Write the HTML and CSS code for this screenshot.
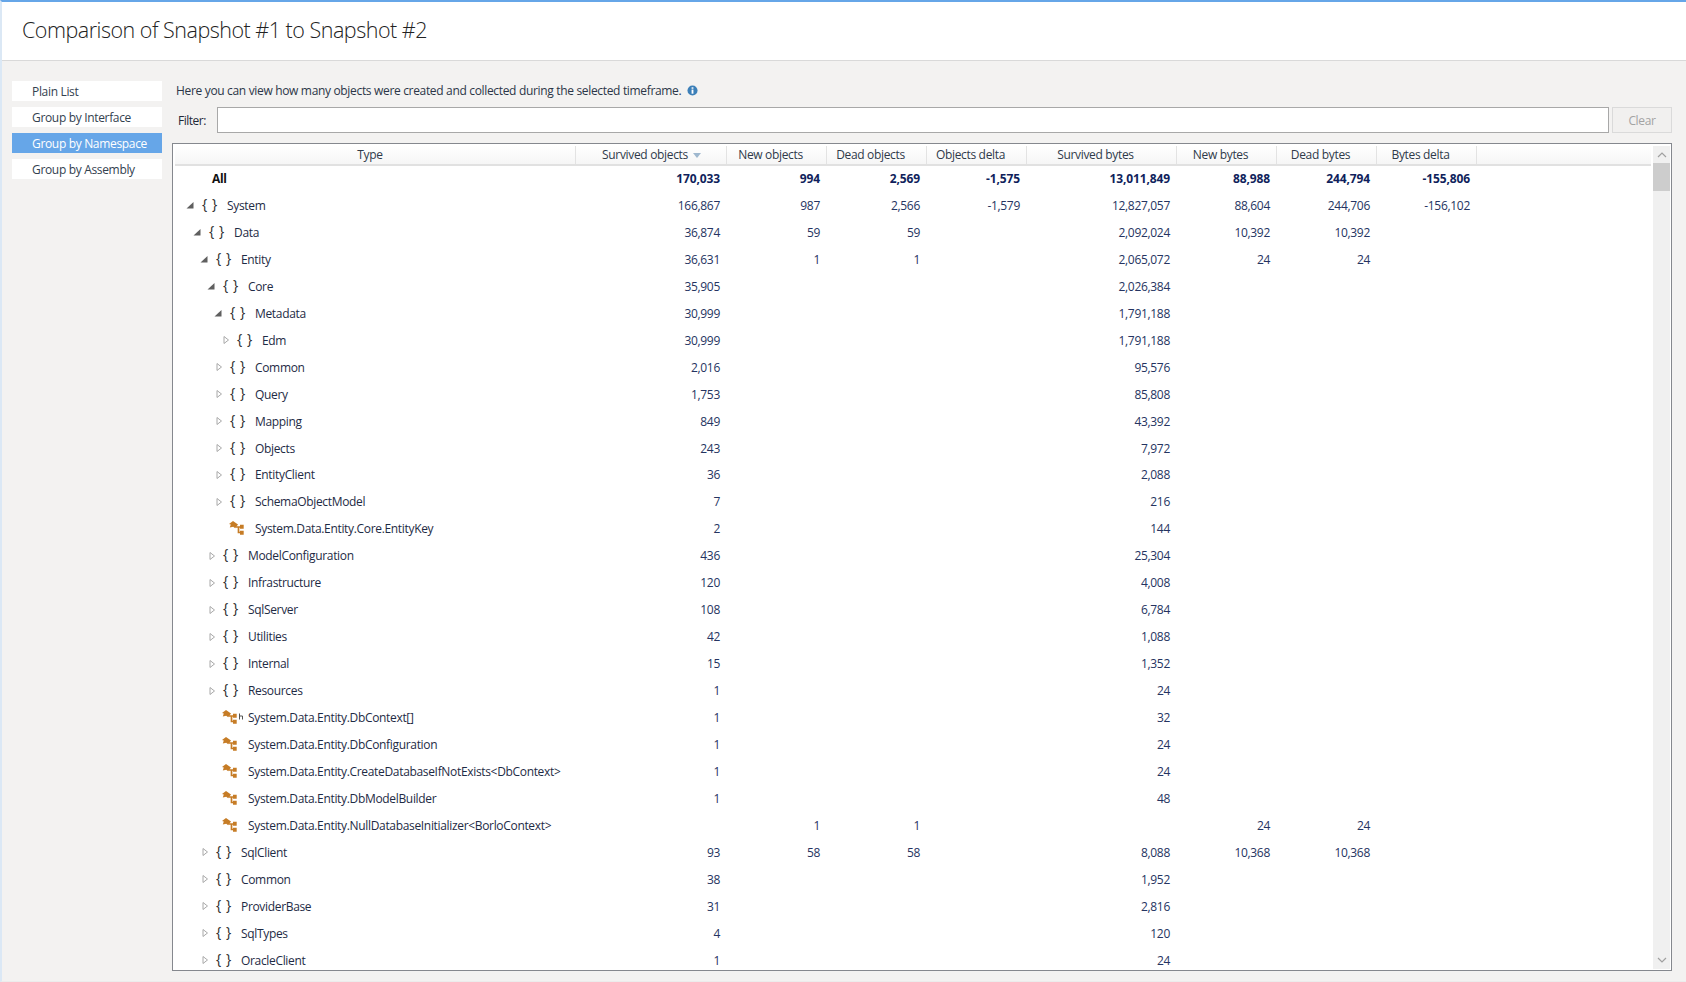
FILE: index.html
```html
<!DOCTYPE html>
<html lang="en">
<head>
<meta charset="utf-8">
<title>Comparison of Snapshot #1 to Snapshot #2</title>
<link rel="stylesheet" href="styles.css">
</head>
<body>
<svg class="defs" width="0" height="0" aria-hidden="true">
  <symbol id="exp" viewBox="0 0 8 10"><path d="M7.500 2v6.500H.5z" fill="#5f5f5f"/></symbol>
  <symbol id="col" viewBox="0 0 8 10"><path d="M3 1.500L7.500 5 3 8.500z" fill="#fff" stroke="#a8a8a8"/></symbol>
  <symbol id="cls" viewBox="0 0 15 14">
    <path d="M4 0l5 3.400L6.200 7.200 4.200 5.700 .8 6.600l1-3L0 3z" fill="#c67c26"/>
    <path d="M7 6h5M9.500 6v5.500h3" fill="none" stroke="#c67c26" stroke-width="1.700"/>
    <path d="M11 3.800h3.700v4H11zM11 9.800h3.700v4H11z" fill="#c67c26"/>
  </symbol>
</svg>
<header class="top"><h1>Comparison of Snapshot #1 to Snapshot #2</h1></header>
<main class="main">
  <nav class="side">
    <a class="item">Plain List</a>
    <a class="item">Group by Interface</a>
    <a class="item on">Group by Namespace</a>
    <a class="item">Group by Assembly</a>
  </nav>
  <section class="content">
    <p class="hint">Here you can view how many objects were created and collected during the selected timeframe.
      <svg class="info" viewBox="0 0 12 12" width="11" height="11"><circle cx="6" cy="6" r="5.500" fill="#3c7fb8"/><rect x="5" y="5" width="2" height="4.500" fill="#fff"/><rect x="5" y="2.500" width="2" height="1.600" fill="#fff"/></svg></p>
    <div class="filter">
      <label class="flabel">Filter:</label>
      <input class="finput" type="text">
      <button class="clear" type="button">Clear</button>
    </div>
    <div class="grid">
      <div class="table">
        <div class="head">
          <div class="htype">Type</div>
          <div>Survived objects<svg class="sort" viewBox="0 0 8 5" width="8" height="5"><path d="M0 0h8L4 5z" fill="#9fb8cf"/></svg></div>
          <div>New objects</div><div>Dead objects</div><div>Objects delta</div><div>Survived bytes</div><div>New bytes</div><div>Dead bytes</div><div>Bytes delta</div><div></div>
        </div>
        <div class="body">
          <div class="row total"><div class="name all">All</div><span>170,033</span><span>994</span><span>2,569</span><span>-1,575</span><span>13,011,849</span><span>88,988</span><span>244,794</span><span>-155,806</span></div>
          <div class="row"><div class="name d0"><svg class="arr"><use href="#exp"/></svg><b class="ic">{ }</b>System</div><span>166,867</span><span>987</span><span>2,566</span><span>-1,579</span><span>12,827,057</span><span>88,604</span><span>244,706</span><span>-156,102</span></div>
          <div class="row"><div class="name d1"><svg class="arr"><use href="#exp"/></svg><b class="ic">{ }</b>Data</div><span>36,874</span><span>59</span><span>59</span><span></span><span>2,092,024</span><span>10,392</span><span>10,392</span><span></span></div>
          <div class="row"><div class="name d2"><svg class="arr"><use href="#exp"/></svg><b class="ic">{ }</b>Entity</div><span>36,631</span><span>1</span><span>1</span><span></span><span>2,065,072</span><span>24</span><span>24</span><span></span></div>
          <div class="row"><div class="name d3"><svg class="arr"><use href="#exp"/></svg><b class="ic">{ }</b>Core</div><span>35,905</span><span></span><span></span><span></span><span>2,026,384</span><span></span><span></span><span></span></div>
          <div class="row"><div class="name d4"><svg class="arr"><use href="#exp"/></svg><b class="ic">{ }</b>Metadata</div><span>30,999</span><span></span><span></span><span></span><span>1,791,188</span><span></span><span></span><span></span></div>
          <div class="row"><div class="name d5"><svg class="arr"><use href="#col"/></svg><b class="ic">{ }</b>Edm</div><span>30,999</span><span></span><span></span><span></span><span>1,791,188</span><span></span><span></span><span></span></div>
          <div class="row"><div class="name d4"><svg class="arr"><use href="#col"/></svg><b class="ic">{ }</b>Common</div><span>2,016</span><span></span><span></span><span></span><span>95,576</span><span></span><span></span><span></span></div>
          <div class="row"><div class="name d4"><svg class="arr"><use href="#col"/></svg><b class="ic">{ }</b>Query</div><span>1,753</span><span></span><span></span><span></span><span>85,808</span><span></span><span></span><span></span></div>
          <div class="row"><div class="name d4"><svg class="arr"><use href="#col"/></svg><b class="ic">{ }</b>Mapping</div><span>849</span><span></span><span></span><span></span><span>43,392</span><span></span><span></span><span></span></div>
          <div class="row"><div class="name d4"><svg class="arr"><use href="#col"/></svg><b class="ic">{ }</b>Objects</div><span>243</span><span></span><span></span><span></span><span>7,972</span><span></span><span></span><span></span></div>
          <div class="row"><div class="name d4"><svg class="arr"><use href="#col"/></svg><b class="ic">{ }</b>EntityClient</div><span>36</span><span></span><span></span><span></span><span>2,088</span><span></span><span></span><span></span></div>
          <div class="row"><div class="name d4"><svg class="arr"><use href="#col"/></svg><b class="ic">{ }</b>SchemaObjectModel</div><span>7</span><span></span><span></span><span></span><span>216</span><span></span><span></span><span></span></div>
          <div class="row"><div class="name d4"><i class="arr"></i><svg class="ic cl"><use href="#cls"/></svg>System.Data.Entity.Core.EntityKey</div><span>2</span><span></span><span></span><span></span><span>144</span><span></span><span></span><span></span></div>
          <div class="row"><div class="name d3"><svg class="arr"><use href="#col"/></svg><b class="ic">{ }</b>ModelConfiguration</div><span>436</span><span></span><span></span><span></span><span>25,304</span><span></span><span></span><span></span></div>
          <div class="row"><div class="name d3"><svg class="arr"><use href="#col"/></svg><b class="ic">{ }</b>Infrastructure</div><span>120</span><span></span><span></span><span></span><span>4,008</span><span></span><span></span><span></span></div>
          <div class="row"><div class="name d3"><svg class="arr"><use href="#col"/></svg><b class="ic">{ }</b>SqlServer</div><span>108</span><span></span><span></span><span></span><span>6,784</span><span></span><span></span><span></span></div>
          <div class="row"><div class="name d3"><svg class="arr"><use href="#col"/></svg><b class="ic">{ }</b>Utilities</div><span>42</span><span></span><span></span><span></span><span>1,088</span><span></span><span></span><span></span></div>
          <div class="row"><div class="name d3"><svg class="arr"><use href="#col"/></svg><b class="ic">{ }</b>Internal</div><span>15</span><span></span><span></span><span></span><span>1,352</span><span></span><span></span><span></span></div>
          <div class="row"><div class="name d3"><svg class="arr"><use href="#col"/></svg><b class="ic">{ }</b>Resources</div><span>1</span><span></span><span></span><span></span><span>24</span><span></span><span></span><span></span></div>
          <div class="row"><div class="name d3"><i class="arr"></i><svg class="ic cl"><use href="#cls"/></svg><svg class="ref" viewBox="0 0 4 8" width="4" height="8"><path d="M.5 .5v6M.5 3h3v3.500" fill="none" stroke="#555"/></svg>System.Data.Entity.DbContext[]</div><span>1</span><span></span><span></span><span></span><span>32</span><span></span><span></span><span></span></div>
          <div class="row"><div class="name d3"><i class="arr"></i><svg class="ic cl"><use href="#cls"/></svg>System.Data.Entity.DbConfiguration</div><span>1</span><span></span><span></span><span></span><span>24</span><span></span><span></span><span></span></div>
          <div class="row"><div class="name d3"><i class="arr"></i><svg class="ic cl"><use href="#cls"/></svg>System.Data.Entity.CreateDatabaseIfNotExists&lt;DbContext&gt;</div><span>1</span><span></span><span></span><span></span><span>24</span><span></span><span></span><span></span></div>
          <div class="row"><div class="name d3"><i class="arr"></i><svg class="ic cl"><use href="#cls"/></svg>System.Data.Entity.DbModelBuilder</div><span>1</span><span></span><span></span><span></span><span>48</span><span></span><span></span><span></span></div>
          <div class="row"><div class="name d3"><i class="arr"></i><svg class="ic cl"><use href="#cls"/></svg>System.Data.Entity.NullDatabaseInitializer&lt;BorloContext&gt;</div><span></span><span>1</span><span>1</span><span></span><span></span><span>24</span><span>24</span><span></span></div>
          <div class="row"><div class="name d2"><svg class="arr"><use href="#col"/></svg><b class="ic">{ }</b>SqlClient</div><span>93</span><span>58</span><span>58</span><span></span><span>8,088</span><span>10,368</span><span>10,368</span><span></span></div>
          <div class="row"><div class="name d2"><svg class="arr"><use href="#col"/></svg><b class="ic">{ }</b>Common</div><span>38</span><span></span><span></span><span></span><span>1,952</span><span></span><span></span><span></span></div>
          <div class="row"><div class="name d2"><svg class="arr"><use href="#col"/></svg><b class="ic">{ }</b>ProviderBase</div><span>31</span><span></span><span></span><span></span><span>2,816</span><span></span><span></span><span></span></div>
          <div class="row"><div class="name d2"><svg class="arr"><use href="#col"/></svg><b class="ic">{ }</b>SqlTypes</div><span>4</span><span></span><span></span><span></span><span>120</span><span></span><span></span><span></span></div>
          <div class="row"><div class="name d2"><svg class="arr"><use href="#col"/></svg><b class="ic">{ }</b>OracleClient</div><span>1</span><span></span><span></span><span></span><span>24</span><span></span><span></span><span></span></div>
        </div>
      </div>
      <div class="scroll">
        <svg class="chev" viewBox="0 0 10 6" width="10" height="6"><path d="M1 5l4-4 4 4" fill="none" stroke="#a0a0a0" stroke-width="1.200"/></svg>
        <div class="thumb"></div>
        <svg class="chev down" viewBox="0 0 10 6" width="10" height="6"><path d="M1 1l4 4 4-4" fill="none" stroke="#a0a0a0" stroke-width="1.200"/></svg>
      </div>
    </div>
  </section>
</main>
</body>
</html>
```
FILE: styles.css
```css
* { box-sizing: border-box; }
html, body { margin: 0; height: 982px; overflow: hidden; }
body {
  display: flex;
  flex-direction: column;
  background: #f3f2f1;
  border-top: 2px solid #66a6e8;
  border-left: 2px solid #dbe8f5;
  border-bottom: 1px solid #ececec;
  font: 12px "Open Sans", "Liberation Sans", sans-serif;
  letter-spacing: -0.33px;
  color: #1f2937;
}
.defs { position: absolute; }
.top {
  height: 59px;
  flex: none;
  background: #fff;
  border-bottom: 1px solid #d9d9d9;
  padding: 0 0 0 20px;
  display: flex;
  align-items: center;
}
.top h1 {
  margin: 0 0 3px;
  font-size: 21.5px;
  font-weight: 300;
  letter-spacing: -0.49px;
  color: #222;
}
.main {
  flex: 1;
  min-height: 0;
  display: flex;
  padding: 20px 14px 10px 10px;
}
.side { width: 150px; flex: none; display: flex; flex-direction: column; gap: 6px; margin-right: 10px; }
.item {
  height: 20px;
  background: #fff;
  padding-left: 20px;
  line-height: 22px;
  color: #33414f;
}
.item.on { background: #66a6e8; color: #fff; }
.content { flex: 1; min-width: 0; display: flex; flex-direction: column; }
.hint {
  margin: 0 0 0 4px;
  height: 26px;
  line-height: 20px;
  display: flex;
  align-items: flex-start;
  gap: 6px;
  color: #2b3648;
  white-space: nowrap;
}
.info { margin-top: 4px; }
.filter { display: flex; align-items: stretch; height: 26px; margin-bottom: 10px; }
.flabel { width: 45px; padding-left: 6px; line-height: 28px; letter-spacing: -0.5px; }
.finput { flex: 1; border: 1px solid #a8a8a8; background: #fff; margin: 0; padding: 0; outline: none; }
.clear {
  width: 60px;
  margin-left: 3px;
  border: 1px solid #dadada;
  background: #f1f0ef;
  color: #a3a3a3;
  font: inherit;
  letter-spacing: inherit;
}
.grid {
  flex: 1;
  min-height: 0;
  display: flex;
  background: #fff;
  border: 1px solid #85888e;
  padding: 2px 1px 1px 2px;
}
.table { flex: 1; min-width: 0; display: flex; flex-direction: column; }
.head, .row {
  display: grid;
  grid-template-columns: 401px 151px 100px 100px 100px 150px 100px 100px 100px 1fr;
}
.head {
  height: 20px;
  flex: none;
  background: linear-gradient(#fff, #f6f6f6);
  border-bottom: 2px solid #e1e1e1;
}
.head div {
  border-right: 1px solid #e3e3e3;
  padding-right: 12px;
  text-align: center;
  line-height: 17px;
  color: #2f3a4a;
  white-space: nowrap;
}
.head .htype { padding-right: 10px; }
.head div:last-child { border-right: 0; }
.sort { margin: 0 -13px 0 5px; vertical-align: 1px; }
.body { flex: 1; min-height: 0; overflow: hidden; }
.row { height: 26.96px; line-height: 26.96px; color: #253461; }
.row span { text-align: right; padding-right: 7px; white-space: nowrap; letter-spacing: -0.3px; }
.total { font-weight: 700; color: #101f5c; }
.total span { letter-spacing: -0.12px; }
.name {
  display: flex;
  align-items: center;
  white-space: nowrap;
  color: #1e2b45;
}
.all { padding-left: 37px; color: #111; }
.d0 { padding-left: 11px; }
.d1 { padding-left: 18px; }
.d2 { padding-left: 25px; }
.d3 { padding-left: 32px; }
.d4 { padding-left: 39px; }
.d5 { padding-left: 46px; }
.arr { width: 8px; height: 10px; flex: none; margin-right: 8px; margin-top: -2px; }
.ic {
  width: 15px;
  height: 14px;
  flex: none;
  margin-right: 10px;
  margin-top: -5px;
  font-weight: 400;
  font-size: 14px;
  line-height: 14px;
  letter-spacing: 0.5px;
  color: #2c2c2c;
  text-align: left;
}
.cl { margin-top: -3px; margin-left: -1px; margin-right: 11px; }
.ref { flex: none; margin: -3px 5px 0 -9px; }
.scroll {
  width: 17px;
  flex: none;
  margin-left: 2px;
  background: #f0f0f0;
  display: flex;
  flex-direction: column;
  align-items: center;
}
.chev { margin-top: 6px; flex: none; }
.thumb { align-self: stretch; height: 28px; margin-top: 5px; background: #cdcdcd; flex: none; }
.down { margin-top: auto; margin-bottom: 6px; }
```
